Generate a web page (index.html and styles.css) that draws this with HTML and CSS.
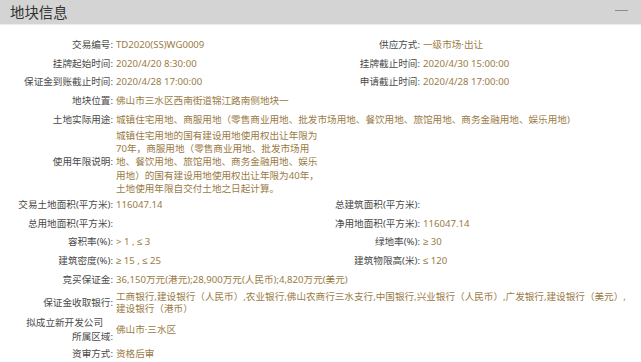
FILE: index.html
```html
<!DOCTYPE html>
<html lang="zh-CN">
<head>
<meta charset="utf-8">
<title>地块信息</title>
<link rel="stylesheet" href="styles.css">
</head>
<body>
<div class="panel">
  <div class="panel-head">
    <h2 class="panel-title">地块信息</h2>
    <span class="collapse"></span>
  </div>
  <div class="panel-body">
    <div class="row">
      <div class="field half"><span class="label">交易编号:</span><span class="value">TD2020(SS)WG0009</span></div>
      <div class="field half"><span class="label">供应方式:</span><span class="value">一级市场·出让</span></div>
    </div>
    <div class="row">
      <div class="field half"><span class="label">挂牌起始时间:</span><span class="value">2020/4/20 8:30:00</span></div>
      <div class="field half"><span class="label">挂牌截止时间:</span><span class="value">2020/4/30 15:00:00</span></div>
    </div>
    <div class="row">
      <div class="field half"><span class="label">保证金到账截止时间:</span><span class="value">2020/4/28 17:00:00</span></div>
      <div class="field half"><span class="label">申请截止时间:</span><span class="value">2020/4/28 17:00:00</span></div>
    </div>
    <div class="row">
      <div class="field"><span class="label">地块位置:</span><span class="value">佛山市三水区西南街道锦江路南侧地块一</span></div>
    </div>
    <div class="row">
      <div class="field"><span class="label">土地实际用途:</span><span class="value">城镇住宅用地、商服用地（零售商业用地、批发市场用地、餐饮用地、旅馆用地、商务金融用地、娱乐用地)</span></div>
    </div>
    <div class="row row--block">
      <div class="field"><span class="label">使用年限说明:</span><span class="value">城镇住宅用地的国有建设用地使用权出让年限为<br>70年，商服用地（零售商业用地、批发市场用<br>地、餐饮用地、旅馆用地、商务金融用地、娱乐<br>用地）的国有建设用地使用权出让年限为40年，<br>土地使用年限自交付土地之日起计算。</span></div>
    </div>
    <div class="row">
      <div class="field half"><span class="label">交易土地面积(平方米):</span><span class="value">116047.14</span></div>
      <div class="field half"><span class="label">总建筑面积(平方米):</span><span class="value"></span></div>
    </div>
    <div class="row">
      <div class="field half"><span class="label">总用地面积(平方米):</span><span class="value"></span></div>
      <div class="field half"><span class="label">净用地面积(平方米):</span><span class="value">116047.14</span></div>
    </div>
    <div class="row">
      <div class="field half"><span class="label">容积率(%):</span><span class="value">&gt; 1 , ≤ 3</span></div>
      <div class="field half"><span class="label">绿地率(%):</span><span class="value">≥ 30</span></div>
    </div>
    <div class="row">
      <div class="field half"><span class="label">建筑密度(%):</span><span class="value">≥ 15 , ≤ 25</span></div>
      <div class="field half"><span class="label">建筑物限高(米):</span><span class="value">≤ 120</span></div>
    </div>
    <div class="row">
      <div class="field"><span class="label">竞买保证金:</span><span class="value">36,150万元(港元);28,900万元(人民币);4,820万元(美元)</span></div>
    </div>
    <div class="row row--bank">
      <div class="field"><span class="label">保证金收取银行:</span><span class="value">工商银行,建设银行（人民币）,农业银行,佛山农商行三水支行,中国银行,兴业银行（人民币）,广发银行,建设银行（美元）,<br>建设银行（港币）</span></div>
    </div>
    <div class="row row--company">
      <div class="field"><span class="label"><span class="label-line">拟成立新开发公司</span><br>所属区域:</span><span class="value">佛山市·三水区</span></div>
    </div>
    <div class="row">
      <div class="field"><span class="label">资审方式:</span><span class="value">资格后审</span></div>
    </div>
  </div>
</div>
</body>
</html>
```

FILE: styles.css
```css
html, body {
  margin: 0;
  padding: 0;
  background: #ffffff;
}

body {
  font-family: "Noto Sans", "Liberation Sans", "Noto Sans CJK SC", sans-serif;
  font-size: 9.6px;
  color: #4a4a4a;
}

.panel {
  width: 641px;
}

.panel-head {
  height: 23.5px;
  background: #d4d4d4;
  border-bottom: 1.5px solid #ececec;
  display: flex;
  align-items: center;
  justify-content: space-between;
  padding: 0 13px 0 10px;
}

.panel-title {
  margin: 0;
  font-family: "Noto Sans CJK SC", sans-serif;
  font-size: 14.4px;
  font-weight: normal;
  color: #333333;
  line-height: 1;
}

.collapse {
  width: 13px;
  height: 1px;
  background: #8c8c8c;
  margin-bottom: 3px;
}

.panel-body {
  padding-top: 10.6px;
}

.row {
  display: flex;
  align-items: center;
  min-height: 18.75px;
  line-height: 13px;
}

.row--block {
  line-height: 13.25px;
}

.row--bank {
  line-height: 12.5px;
  padding-top: 2px;
}

.row--company {
  line-height: 14px;
}

.field {
  display: flex;
  align-items: center;
}

.half {
  width: 306px;
}

.label {
  flex: none;
  width: 113px;
  text-align: right;
  color: #4a4a4a;
  white-space: nowrap;
}

.half + .half .label {
  width: 114px;
}

.label-line {
  display: inline-block;
  padding-right: 10px;
}

.value {
  margin-left: 3px;
  color: #9a7b46;
  white-space: nowrap;
}
```
